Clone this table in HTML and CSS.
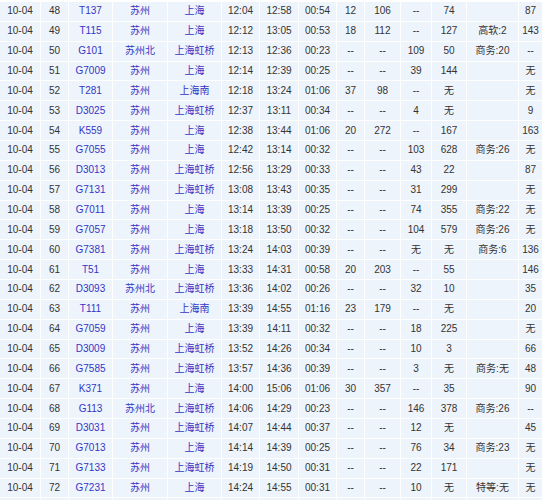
FILE: index.html
```html
<!DOCTYPE html>
<html lang="zh-CN">
<head>
<meta charset="utf-8">
<title>苏州-上海 列车时刻</title>
<link rel="stylesheet" href="styles.css">
</head>
<body>
<table class="trains">
<colgroup>
<col class="c-date"><col class="c-no"><col class="c-train"><col class="c-from"><col class="c-to"><col class="c-dep"><col class="c-arr"><col class="c-dur"><col class="c-a"><col class="c-b"><col class="c-c"><col class="c-d"><col class="c-e"><col class="c-f">
</colgroup>
<tbody>
<tr><td>10-04</td><td>48</td><td class="lk">T137</td><td class="lk">苏州</td><td class="lk">上海</td><td>12:04</td><td>12:58</td><td>00:54</td><td>12</td><td>106</td><td>--</td><td>74</td><td></td><td>87</td></tr>
<tr><td>10-04</td><td>49</td><td class="lk">T115</td><td class="lk">苏州</td><td class="lk">上海</td><td>12:12</td><td>13:05</td><td>00:53</td><td>18</td><td>112</td><td>--</td><td>127</td><td>高软:2</td><td>143</td></tr>
<tr><td>10-04</td><td>50</td><td class="lk">G101</td><td class="lk">苏州北</td><td class="lk">上海虹桥</td><td>12:13</td><td>12:36</td><td>00:23</td><td>--</td><td>--</td><td>109</td><td>50</td><td>商务:20</td><td>--</td></tr>
<tr><td>10-04</td><td>51</td><td class="lk">G7009</td><td class="lk">苏州</td><td class="lk">上海</td><td>12:14</td><td>12:39</td><td>00:25</td><td>--</td><td>--</td><td>39</td><td>144</td><td></td><td>无</td></tr>
<tr><td>10-04</td><td>52</td><td class="lk">T281</td><td class="lk">苏州</td><td class="lk">上海南</td><td>12:18</td><td>13:24</td><td>01:06</td><td>37</td><td>98</td><td>--</td><td>无</td><td></td><td>无</td></tr>
<tr><td>10-04</td><td>53</td><td class="lk">D3025</td><td class="lk">苏州</td><td class="lk">上海虹桥</td><td>12:37</td><td>13:11</td><td>00:34</td><td>--</td><td>--</td><td>4</td><td>无</td><td></td><td>9</td></tr>
<tr><td>10-04</td><td>54</td><td class="lk">K559</td><td class="lk">苏州</td><td class="lk">上海</td><td>12:38</td><td>13:44</td><td>01:06</td><td>20</td><td>272</td><td>--</td><td>167</td><td></td><td>163</td></tr>
<tr><td>10-04</td><td>55</td><td class="lk">G7055</td><td class="lk">苏州</td><td class="lk">上海</td><td>12:42</td><td>13:14</td><td>00:32</td><td>--</td><td>--</td><td>103</td><td>628</td><td>商务:26</td><td>无</td></tr>
<tr><td>10-04</td><td>56</td><td class="lk">D3013</td><td class="lk">苏州</td><td class="lk">上海虹桥</td><td>12:56</td><td>13:29</td><td>00:33</td><td>--</td><td>--</td><td>43</td><td>22</td><td></td><td>87</td></tr>
<tr><td>10-04</td><td>57</td><td class="lk">G7131</td><td class="lk">苏州</td><td class="lk">上海虹桥</td><td>13:08</td><td>13:43</td><td>00:35</td><td>--</td><td>--</td><td>31</td><td>299</td><td></td><td>无</td></tr>
<tr><td>10-04</td><td>58</td><td class="lk">G7011</td><td class="lk">苏州</td><td class="lk">上海</td><td>13:14</td><td>13:39</td><td>00:25</td><td>--</td><td>--</td><td>74</td><td>355</td><td>商务:22</td><td>无</td></tr>
<tr><td>10-04</td><td>59</td><td class="lk">G7057</td><td class="lk">苏州</td><td class="lk">上海</td><td>13:18</td><td>13:50</td><td>00:32</td><td>--</td><td>--</td><td>104</td><td>579</td><td>商务:26</td><td>无</td></tr>
<tr><td>10-04</td><td>60</td><td class="lk">G7381</td><td class="lk">苏州</td><td class="lk">上海虹桥</td><td>13:24</td><td>14:03</td><td>00:39</td><td>--</td><td>--</td><td>无</td><td>无</td><td>商务:6</td><td>136</td></tr>
<tr><td>10-04</td><td>61</td><td class="lk">T51</td><td class="lk">苏州</td><td class="lk">上海</td><td>13:33</td><td>14:31</td><td>00:58</td><td>20</td><td>203</td><td>--</td><td>55</td><td></td><td>146</td></tr>
<tr><td>10-04</td><td>62</td><td class="lk">D3093</td><td class="lk">苏州北</td><td class="lk">上海虹桥</td><td>13:36</td><td>14:02</td><td>00:26</td><td>--</td><td>--</td><td>32</td><td>10</td><td></td><td>35</td></tr>
<tr><td>10-04</td><td>63</td><td class="lk">T111</td><td class="lk">苏州</td><td class="lk">上海南</td><td>13:39</td><td>14:55</td><td>01:16</td><td>23</td><td>179</td><td>--</td><td>无</td><td></td><td>20</td></tr>
<tr><td>10-04</td><td>64</td><td class="lk">G7059</td><td class="lk">苏州</td><td class="lk">上海</td><td>13:39</td><td>14:11</td><td>00:32</td><td>--</td><td>--</td><td>18</td><td>225</td><td></td><td>无</td></tr>
<tr><td>10-04</td><td>65</td><td class="lk">D3009</td><td class="lk">苏州</td><td class="lk">上海虹桥</td><td>13:52</td><td>14:26</td><td>00:34</td><td>--</td><td>--</td><td>10</td><td>3</td><td></td><td>66</td></tr>
<tr><td>10-04</td><td>66</td><td class="lk">G7585</td><td class="lk">苏州</td><td class="lk">上海虹桥</td><td>13:57</td><td>14:36</td><td>00:39</td><td>--</td><td>--</td><td>3</td><td>无</td><td>商务:无</td><td>48</td></tr>
<tr><td>10-04</td><td>67</td><td class="lk">K371</td><td class="lk">苏州</td><td class="lk">上海</td><td>14:00</td><td>15:06</td><td>01:06</td><td>30</td><td>357</td><td>--</td><td>35</td><td></td><td>90</td></tr>
<tr><td>10-04</td><td>68</td><td class="lk">G113</td><td class="lk">苏州北</td><td class="lk">上海虹桥</td><td>14:06</td><td>14:29</td><td>00:23</td><td>--</td><td>--</td><td>146</td><td>378</td><td>商务:26</td><td>--</td></tr>
<tr><td>10-04</td><td>69</td><td class="lk">D3031</td><td class="lk">苏州</td><td class="lk">上海虹桥</td><td>14:07</td><td>14:44</td><td>00:37</td><td>--</td><td>--</td><td>12</td><td>无</td><td></td><td>45</td></tr>
<tr><td>10-04</td><td>70</td><td class="lk">G7013</td><td class="lk">苏州</td><td class="lk">上海</td><td>14:14</td><td>14:39</td><td>00:25</td><td>--</td><td>--</td><td>76</td><td>34</td><td>商务:23</td><td>无</td></tr>
<tr><td>10-04</td><td>71</td><td class="lk">G7133</td><td class="lk">苏州</td><td class="lk">上海虹桥</td><td>14:19</td><td>14:50</td><td>00:31</td><td>--</td><td>--</td><td>22</td><td>171</td><td></td><td>无</td></tr>
<tr><td>10-04</td><td>72</td><td class="lk">G7231</td><td class="lk">苏州</td><td class="lk">上海</td><td>14:24</td><td>14:55</td><td>00:31</td><td>--</td><td>--</td><td>10</td><td>无</td><td>特等:无</td><td>无</td></tr>
<tr class="tail"><td></td><td></td><td></td><td></td><td></td><td></td><td></td><td></td><td></td><td></td><td></td><td></td><td></td><td></td></tr>
</tbody>
</table>
</body>
</html>
```

FILE: styles.css
```css
html, body {
  margin: 0;
  padding: 0;
  background: #ffffff;
  overflow: hidden;
}

.trains {
  table-layout: fixed;
  width: 544px;
  margin: 1px 0 0 -1px;
  border-collapse: separate;
  border-spacing: 1px;
  font-family: "Liberation Sans", Arial, "Noto Sans CJK SC", sans-serif;
  font-size: 10px;
  color: #333333;
}

.trains td {
  height: 18.87px;
  padding: 0;
  background: #eef4fc;
  text-align: center;
  vertical-align: middle;
  white-space: nowrap;
  overflow: hidden;
  line-height: 12px;
}

.trains td.lk {
  color: #3535c4;
}

.c-date { width: 40px; }
.c-no { width: 27px; }
.c-train { width: 43px; }
.c-from { width: 54px; }
.c-to { width: 53px; }
.c-dep { width: 37px; }
.c-arr { width: 38px; }
.c-dur { width: 37px; }
.c-a { width: 27px; }
.c-b { width: 35px; }
.c-c { width: 30px; }
.c-d { width: 34px; }
.c-e { width: 51px; }
.c-f { width: 23px; }
```
